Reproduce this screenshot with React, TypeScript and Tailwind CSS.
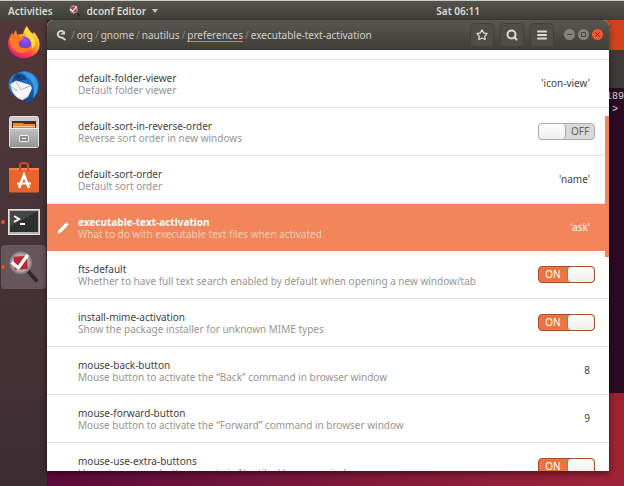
import React from 'react';
import { Search, Star, Menu, Pencil } from 'lucide-react';

interface Setting {
  name: string;
  summary: string;
  value: string | boolean;
}

const settings: Setting[] = [
  { name: 'default-folder-viewer', summary: 'Default folder viewer', value: "'icon-view'" },
  { name: 'default-sort-in-reverse-order', summary: 'Reverse sort order in new windows', value: false },
  { name: 'default-sort-order', summary: 'Default sort order', value: "'name'" },
  { name: 'executable-text-activation', summary: 'What to do with executable text files when activated', value: "'ask'" },
  { name: 'fts-default', summary: 'Whether to have full text search enabled by default when opening a new window/tab', value: true },
  { name: 'install-mime-activation', summary: 'Show the package installer for unknown MIME types', value: true },
  { name: 'mouse-back-button', summary: 'Mouse button to activate the “Back” command in browser window', value: '8' },
  { name: 'mouse-forward-button', summary: 'Mouse button to activate the “Forward” command in browser window', value: '9' },
  { name: 'mouse-use-extra-buttons', summary: "Use extra mouse button events in Nautilus' browser window", value: true },
];

const path = ['org', 'gnome', 'nautilus', 'preferences', 'executable-text-activation'];

const FirefoxIcon = () => (
  <svg viewBox="0 0 32 32" className="h-8 w-8" aria-hidden="true">
    <defs>
      <linearGradient id="fx-body" x1="0.85" y1="0.1" x2="0.2" y2="0.95">
        <stop offset="0" stopColor="#ffe63e" />
        <stop offset="0.4" stopColor="#ff9a24" />
        <stop offset="0.7" stopColor="#ff3c4f" />
        <stop offset="1" stopColor="#e9168c" />
      </linearGradient>
      <radialGradient id="fx-globe" cx="0.6" cy="0.25" r="0.8">
        <stop offset="0" stopColor="#a04ff0" />
        <stop offset="1" stopColor="#4b42c4" />
      </radialGradient>
    </defs>
    <path d="M19 0c1 3 3 5 6 8l1-2c4 5 6 9 5.600 13.500C31 27 24.500 32 16 32S0 26 0 17.500C0 13 2 9 4.500 6.500L5 9l3-5 1 5c2-1 4-1 6-1 1-4 2-6 4-8z" fill="url(#fx-body)" />
    <circle cx="16" cy="17.500" r="7" fill="url(#fx-globe)" />
    <path d="M2 12c4-3 8-3 11-1l3 1c-1 2-4 2-5 4-1 3 1 6 5 6 4 1 6-1 7-3-1 6-6 9-11 8C5 26 1 19 2 12z" fill="#ff7a22" />
    <path d="M19 1c1 4 5 6 7 11 2 4 1 8-2 11 1-7-2-10-6-13-2-3-1-6 1-9z" fill="#ffdc3b" />
  </svg>
);

const ThunderbirdIcon = () => (
  <svg viewBox="0 0 33 34" className="h-8 w-8" aria-hidden="true">
    <defs>
      <linearGradient id="tb-body" x1="0.2" y1="0" x2="0.8" y2="1">
        <stop offset="0" stopColor="#2a86d6" />
        <stop offset="0.6" stopColor="#1b66b5" />
        <stop offset="1" stopColor="#173f8a" />
      </linearGradient>
    </defs>
    <path d="M8 3C15-2 25 0 30 7c5 8 2 18-4 23-4 3-6 4-9 4 1-2 1-3 0-4C6 29 0 22 0 15 0 9 4 4 8 3z" fill="url(#tb-body)" />
    <path d="M14 1c8-1 15 4 17 12 1 7-1 12-5 16 2-9 1-16-4-21-3-3-5-5-8-7z" fill="#3b9be4" />
    <path d="M8 3c5-1 9 1 12 6l-7 1-9 3c0-4 1-7 4-10z" fill="#164a87" />
    <path d="M2 14l6-4 15 5 2 3-4 9-6 4C8 29 3 23 2 14z" fill="#f6f6f9" />
    <path d="M8 11l5 9 10-4M3 17l7 4" fill="none" stroke="#aab0bd" />
    <circle cx="10" cy="6" r="1" fill="#0b2347" />
  </svg>
);

const FilesIcon = () => (
  <svg viewBox="0 0 30 32" className="h-8 w-8" aria-hidden="true">
    <defs>
      <linearGradient id="files-front" x1="0" y1="0" x2="0" y2="1">
        <stop offset="0" stopColor="#c4c4c4" />
        <stop offset="1" stopColor="#939393" />
      </linearGradient>
    </defs>
    <rect x="0.500" y="0.500" width="29" height="31" rx="2" fill="#cbcbcb" stroke="#e2e2e2" />
    <rect x="3" y="5" width="24" height="7" fill="#4d2d1c" />
    <path d="M4 12V7h10l1 1h11v4z" fill="#e9853a" />
    <path d="M4 10.500h22" stroke="#ffc48d" />
    <rect x="1" y="12" width="28" height="19" rx="1" fill="url(#files-front)" />
    <path d="M1 12.500h28" stroke="#eee" />
    <rect x="10.500" y="19.500" width="9" height="6" rx="1" fill="#8a8a8a" stroke="#f4f4f4" />
    <path d="M13 22.500h4" stroke="#fff" />
  </svg>
);

const SoftwareIcon = () => (
  <svg viewBox="0 0 30 32" className="h-8 w-8" aria-hidden="true">
    <path d="M0 7h30v23a1.500 1.500 0 0 1-1.500 1.500h-27A1.500 1.500 0 0 1 0 30z" fill="#e9652d" />
    <path d="M0 7h30v2H0z" fill="#f3824e" />
    <path d="M11 10V4q0-2 4-2t4 2v6" fill="none" stroke="#d2501d" strokeWidth="2" />
    <path d="M10 27l5-13 5 13" fill="none" stroke="#fff" strokeWidth="2.500" />
    <path d="M8 22.500h14" stroke="#fff" strokeWidth="2" />
  </svg>
);

const TerminalIcon = () => (
  <svg viewBox="0 0 32 26" className="h-7 w-8" aria-hidden="true">
    <rect x="0.500" y="0.500" width="31" height="25" fill="#b5b5b5" stroke="#e2e2e2" />
    <rect x="2" y="2" width="28" height="21" fill="#2d302e" />
    <path d="M2 2h28L2 18z" fill="#434644" />
    <path d="M6 7l5 3-5 3M12 15h5" fill="none" stroke="#fff" strokeWidth="2" />
  </svg>
);

const DconfIcon = ({ className }: { className: string }) => (
  <svg viewBox="0 0 32 34" className={className} aria-hidden="true">
    <path d="M20 21l9 10" stroke="#2c2b2b" strokeWidth="4" strokeLinecap="round" />
    <circle cx="12.500" cy="12.500" r="11" fill="#b9a2a5" stroke="#85858a" strokeWidth="2" />
    <path d="M5 6l14-1 1 14-14 1z" fill="#b62c35" />
    <path d="M3 12l7 6L20 4" fill="none" stroke="#fff" strokeWidth="3.500" />
  </svg>
);

const dockApps = [
  { label: 'Firefox', icon: <FirefoxIcon />, running: false, active: false },
  { label: 'Thunderbird', icon: <ThunderbirdIcon />, running: false, active: false },
  { label: 'Files', icon: <FilesIcon />, running: false, active: false },
  { label: 'Ubuntu Software', icon: <SoftwareIcon />, running: false, active: false },
  { label: 'Terminal', icon: <TerminalIcon />, running: true, active: false },
  { label: 'dconf Editor', icon: <DconfIcon className="h-8 w-8" />, running: true, active: true },
];

const TopBar = () => (
  <header className="flex h-5 shrink-0 items-center border-t border-[#c9cbc8] bg-linear-to-b from-[#55534b] to-[#403f3a] pr-36 pl-2 text-[10px] leading-4 font-semibold whitespace-nowrap text-[#dedbd3]">
    <button type="button">Activities</button>
    <button type="button" className="ml-4 flex items-center gap-1.5">
      <DconfIcon className="h-3 w-3" />
      <span>dconf Editor</span>
      <span className="border-x-3 border-t-4 border-x-transparent border-t-[#c9c6be]" />
    </button>
    <time className="ml-auto">Sat 06:11</time>
  </header>
);

const Dock = () => (
  <nav aria-label="Dock" className="flex w-[47px] shrink-0 flex-col gap-px bg-linear-to-b from-[#51383a] to-[#3d2d33]">
    {dockApps.map((app) => (
      <button
        key={app.label}
        type="button"
        aria-label={app.label}
        className={`relative mx-px flex h-11 shrink-0 items-center justify-center rounded-sm ${app.active ? 'bg-[#66565b]' : ''}`}
      >
        {app.running && <span className="absolute left-0 h-1 w-1 rounded-full bg-[#e95420]" />}
        {app.icon}
      </button>
    ))}
  </nav>
);

const headerButton = 'flex h-6 w-6 items-center justify-center rounded-sm border border-[#434139] bg-[#4f4d46] text-[#dfdbd2]';

const HeaderBar = () => (
  <div className="flex h-[30px] shrink-0 items-center gap-1.5 rounded-t-md border-b border-[#33322e] bg-linear-to-b from-[#59574f] to-[#403f3a] pr-1.5 pl-2">
    <nav aria-label="Path" className="flex min-w-0 flex-1 items-center gap-0.5 pt-px text-[10px] whitespace-nowrap text-[#d3cfc5]">
      <button type="button" aria-label="Search path" className="pr-0.5">
        <svg viewBox="0 0 12 12" className="h-3 w-3" fill="none" stroke="#dfdbd2">
          <path d="M8.500 3A3.300 3.300 0 1 0 7 8.500l3.500 2.500" strokeWidth="1.800" />
          <path d="M5 5.500h5V2z" fill="#dfdbd2" stroke="none" />
        </svg>
      </button>
      {path.map((part) => (
        <React.Fragment key={part}>
          <span className="text-[#8e8b83]">/</span>
          <a href="#" className={`border-b leading-3 ${part === 'preferences' ? 'border-[#f07746]' : 'border-transparent'}`}>
            {part}
          </a>
        </React.Fragment>
      ))}
    </nav>
    <button type="button" aria-label="Bookmark" className={headerButton}><Star className="h-3 w-3" strokeWidth={2.5} /></button>
    <button type="button" aria-label="Search" className={headerButton}><Search className="h-3 w-3" strokeWidth={4} /></button>
    <button type="button" aria-label="Menu" className={headerButton}>
      <Menu className="h-3 w-3" strokeWidth={4} />
    </button>
    <div className="ml-1 flex gap-[3px]">
      <button type="button" aria-label="Minimize" className="h-[11px] w-[11px] rounded-full bg-[#85837b]">
        <svg viewBox="0 0 11 11" stroke="#45443f"><path d="M3 5.500h5" /></svg>
      </button>
      <button type="button" aria-label="Maximize" className="h-[11px] w-[11px] rounded-full bg-[#85837b]">
        <svg viewBox="0 0 11 11" fill="none" stroke="#45443f"><path d="M3.500 3.500h4v4h-4z" /></svg>
      </button>
      <button type="button" aria-label="Close" className="h-[11px] w-[11px] rounded-full bg-[#ee5c2b]">
        <svg viewBox="0 0 11 11" stroke="#5c2411"><path d="M3.500 3.500l4 4M7.500 3.500l-4 4" /></svg>
      </button>
    </div>
  </div>
);

const Toggle = ({ on, label }: { on: boolean; label: string }) => (
  <button
    type="button"
    role="switch"
    aria-checked={on}
    aria-label={label}
    className={`flex h-[17px] w-[57px] shrink-0 rounded-sm border text-[10px] leading-[15px] ${on ? 'border-[#a5502f] bg-[#ed7340] text-white' : 'flex-row-reverse border-[#aaa] bg-[#d9d9d8] text-[#62625f]'}`}
  >
    <span className="flex-1">{on ? 'ON' : 'OFF'}</span>
    <span className={`h-full w-[27px] rounded-sm bg-linear-to-b from-white to-[#ececeb] ${on ? 'border-l border-[#b9704f]' : 'border-r border-[#aaa]'}`} />
  </button>
);

const SettingRow = ({ setting }: { setting: Setting }) => {
  const selected = setting.name === 'executable-text-activation';

  return (
    <li className={`flex shrink-0 items-center pr-[14px] ${selected ? 'h-[47px] bg-[#f28559] text-white' : 'h-12 border-b border-[#e3e3e3] text-[#3f3f3d]'}`}>
      <div className="flex w-[31px] shrink-0 justify-center">
        {selected && <Pencil className="h-3 w-3" fill="currentColor" />}
      </div>
      <div className="min-w-0 flex-1 text-[10px] leading-3 whitespace-nowrap">
        <div className={selected ? 'font-bold' : ''}>{setting.name}</div>
        <div className={selected ? 'text-[#f9cdb8]' : 'text-[#979592]'}>{setting.summary}</div>
      </div>
      {typeof setting.value === 'boolean' ? (
        <Toggle on={setting.value} label={setting.name} />
      ) : (
        <span className="pr-[5px] text-[10px]">{setting.value}</span>
      )}
    </li>
  );
};

const App = () => (
  <div className="flex h-screen flex-col overflow-hidden bg-[#5a0838] font-['Noto_Sans','Open_Sans',sans-serif]">
    <TopBar />
    <div className="flex min-h-0 flex-1">
      <Dock />
      <main className="relative flex min-w-0 flex-1 bg-linear-to-r from-[#5a0a3a] to-[#a02336] pr-[15px] pb-[15px]">
        {/* terminal window behind the editor */}
        <div className="absolute top-0 right-0 bottom-4 flex w-10 flex-col bg-[#9c2431] text-right">
          <div className="h-[30px] shrink-0 bg-[#d0441c]" />
          <div className="h-[38px] shrink-0 bg-[#3c3b37]" />
          <pre className="h-[305px] shrink-0 bg-[#2c0a22] pt-0.5 font-['Liberation_Mono',monospace] text-[10px] leading-[13px] text-[#d8d4d6]">{'189\n> '}</pre>
        </div>
        <section className="relative flex min-w-0 flex-1 flex-col rounded-t-md bg-white shadow-[0_2px_6px_0_rgba(0,0,0,0.5)]">
          <HeaderBar />
          <ul className="min-h-0 flex-1 overflow-hidden">
            <li className="h-[10px] border-b border-[#e3e3e3]" />
            {settings.map((setting) => (
              <SettingRow key={setting.name} setting={setting} />
            ))}
          </ul>
          {/* scrollbar */}
          <div className="absolute top-24 right-0 h-[141px] w-1 bg-[#f28559]" />
        </section>
      </main>
    </div>
  </div>
);

export default App;
